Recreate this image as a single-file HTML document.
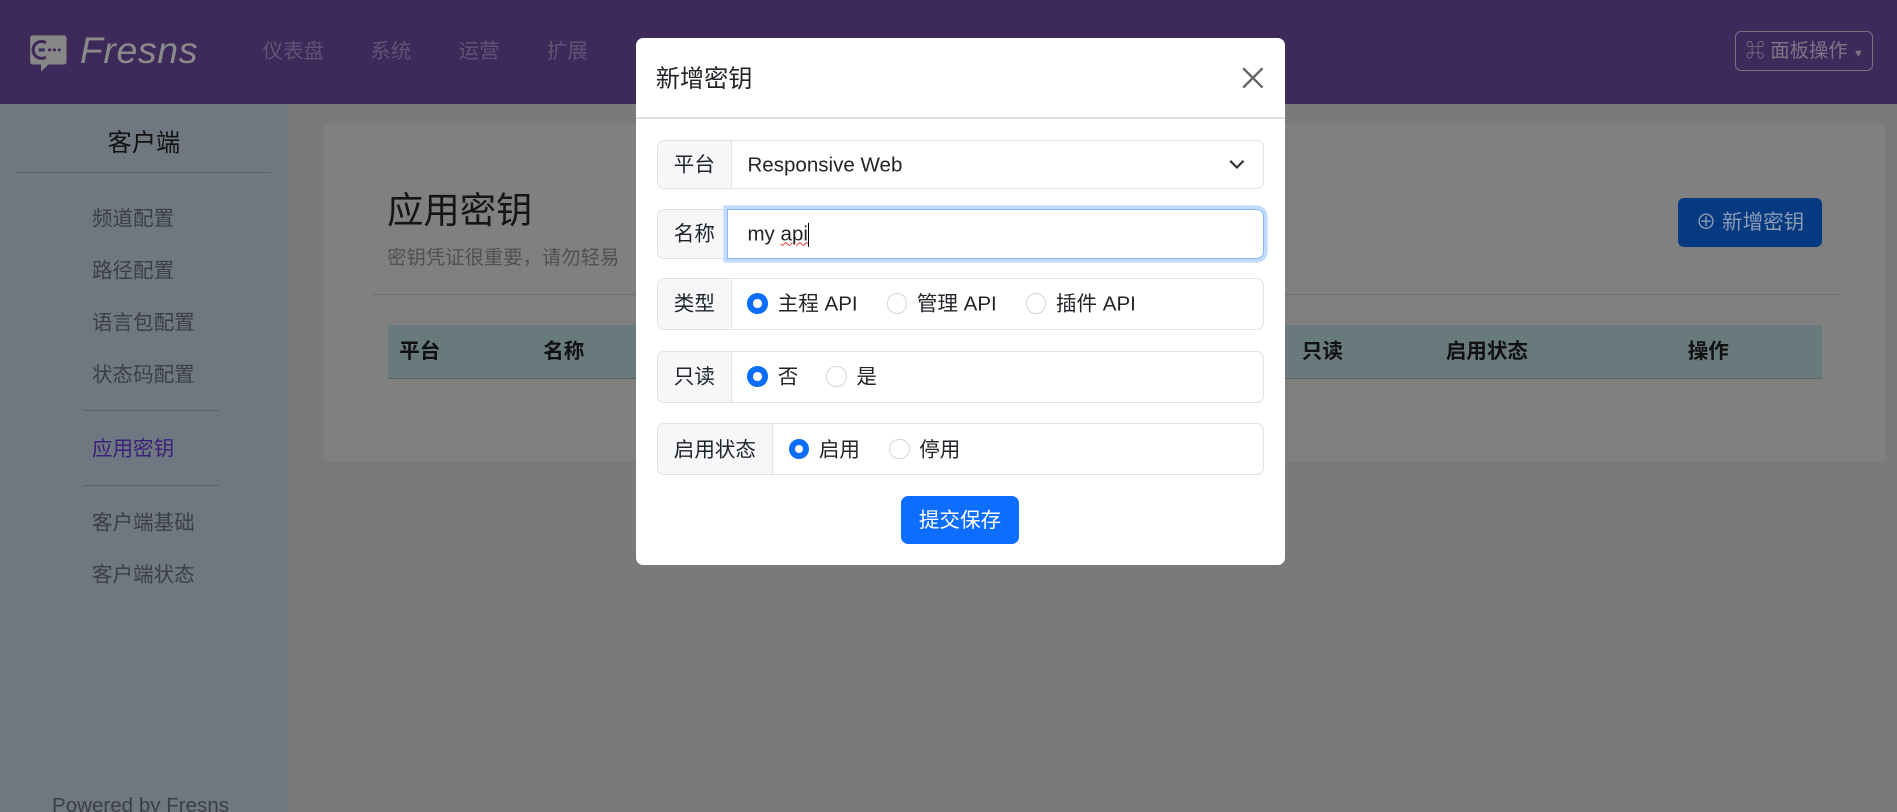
<!DOCTYPE html>
<html><head><meta charset="utf-8"><style>
*{box-sizing:border-box;margin:0;padding:0}
html,body{width:1897px;height:812px;overflow:hidden}
body{font-family:"Liberation Sans","Noto Sans CJK SC",sans-serif;background:#7a7a7a}
#w{zoom:1.20982;width:1568px;height:671px;position:relative;overflow:hidden;background:#7a7a7a}
.a{position:absolute;white-space:nowrap}
.hdr{left:0;top:0;width:1568px;height:86px;background:#3d2a5b}
.nav{top:33px;font-size:17px;color:#5f5475;line-height:1.2}
.side{left:0;top:86px;width:238px;height:585px;background:#6f7780}
.si{left:76px;font-size:17px;color:#3b3f45;transform:translateY(-50%);line-height:1;margin-top:2px}
.ln{height:1px;background:#5c636b}
.card{left:268px;top:102px;width:1290px;height:280px;background:#808080}
.th{top:283px;font-size:17px;font-weight:bold;color:#111;line-height:1}
.modal{left:526px;top:31px;width:536px;height:436px;background:#fff;border-radius:6px}
.grp{left:543px;width:502px;border:1px solid #dee2e6;border-radius:6px;background:#fff;overflow:hidden}
.lbl{position:absolute;left:0;top:0;bottom:0;background:#f6f7f9;border-right:1px solid #dee2e6;font-size:17px;color:#212529;text-align:center}
.lbl span{position:absolute;left:0;right:0;top:50%;transform:translateY(-50%);line-height:1;margin-top:1px}
.r{position:absolute;width:17px;height:17px;border-radius:50%;border:1px solid #d3d6da;top:50%;margin-top:-9px}
.r.on{border:5px solid #0d6efd}
.rt{position:absolute;font-size:17px;color:#212529;top:50%;transform:translateY(-50%);line-height:1;margin-top:1px}
</style></head><body><div id="w">
<div class="a hdr"></div>
<svg class="a" style="left:24px;top:27px" width="32" height="34" viewBox="0 0 32 34"><path d="M3 2h26a2 2 0 0 1 2 2v20a2 2 0 0 1-2 2H16l-6 6v-6H3a2 2 0 0 1-2-2V4a2 2 0 0 1 2-2z" fill="#878787"/><path d="M14 8a7 7 0 1 0 0 12" stroke="#3d2a5b" stroke-width="2.5" fill="none"/><path d="M8 14h5" stroke="#3d2a5b" stroke-width="2.5"/><circle cx="17" cy="14" r="1.3" fill="#3d2a5b"/><circle cx="21" cy="14" r="1.3" fill="#3d2a5b"/><circle cx="25" cy="14" r="1.3" fill="#3d2a5b"/></svg>
<div class="a" style="left:66px;top:24px;font-size:31px;font-style:italic;color:#8a8a8a;letter-spacing:0.5px">Fresns</div>
<div class="a nav" style="left:217px">仪表盘</div>
<div class="a nav" style="left:306px">系统</div>
<div class="a nav" style="left:379px">运营</div>
<div class="a nav" style="left:452px">扩展</div>
<div class="a" style="left:1434px;top:26px;width:114px;height:33px;border:1px solid #7a7080;border-radius:5px;color:#7d7585;font-size:16px;line-height:33px;padding-left:8px">⌘ 面板操作 <span style="font-size:9px">▼</span></div>
<div class="a side"></div>
<div class="a" style="left:0;width:238px;top:108px;text-align:center;font-size:20px;color:#111;line-height:1.1">客户端</div>
<div class="a ln" style="left:12px;top:142px;width:212px"></div>
<div class="a si" style="top:180px">频道配置</div>
<div class="a si" style="top:223px">路径配置</div>
<div class="a si" style="top:266px">语言包配置</div>
<div class="a si" style="top:309px">状态码配置</div>
<div class="a ln" style="left:69px;top:339px;width:112px"></div>
<div class="a si" style="top:370px;color:#3b1f78">应用密钥</div>
<div class="a ln" style="left:69px;top:401px;width:112px"></div>
<div class="a si" style="top:431px">客户端基础</div>
<div class="a si" style="top:474px">客户端状态</div>
<div class="a" style="left:43px;top:656px;font-size:17px;color:#3b3f45">Powered by Fresns</div>
<div class="a card"></div>
<div class="a" style="left:320px;top:158px;font-size:30px;color:#151515;line-height:1.1">应用密钥</div>
<div class="a" style="left:320px;top:205px;font-size:16px;color:#505050;line-height:1.1">密钥凭证很重要，请勿轻易</div>
<div class="a" style="left:1387px;top:164px;width:119px;height:40px;background:#063a80;border-radius:5px;color:#8d9bb5;font-size:17px;line-height:42px;text-align:center">⊕ 新增密钥</div>
<div class="a" style="left:308px;top:243px;width:1212px;height:1px;background:#6e6e6e"></div>
<div class="a" style="left:321px;top:269px;width:1185px;height:44px;background:#687a7c;border-bottom:1px solid #5a6566"></div>
<div class="a th" style="left:330px">平台</div>
<div class="a th" style="left:449px">名称</div>
<div class="a th" style="left:1076px">只读</div>
<div class="a th" style="left:1195px">启用状态</div>
<div class="a th" style="left:1395px">操作</div>

<div class="a modal"></div>
<div class="a" style="left:542px;top:55px;font-size:20px;color:#212529;line-height:1.1">新增密钥</div>
<svg class="a" style="left:1027px;top:55px" width="18" height="18" viewBox="0 0 18 18"><path d="M1 1L17 17M17 1L1 17" stroke="#666" stroke-width="2"/></svg>
<div class="a" style="left:526px;top:97px;width:536px;height:1px;background:#dee2e6"></div>

<div class="a grp" style="top:116px;height:40px"><div class="lbl" style="width:61px"><span>平台</span></div><div class="rt" style="left:74px">Responsive Web</div><svg style="position:absolute;right:15px;top:15px" width="13" height="9" viewBox="0 0 13 9"><path d="M1 1.5l5.5 5.5 5.5-5.5" stroke="#333" stroke-width="1.8" fill="none"/></svg></div>
<div class="a grp" style="top:173px;height:41px"><div class="lbl" style="width:61px"><span>名称</span></div></div>
<div class="a" style="left:601px;top:173px;width:444px;height:41px;border:1px solid #86b7fe;border-radius:0 6px 6px 0;box-shadow:0 0 0 3px #c2dbfe;background:#fff"><div class="rt" style="left:16px">my <span style="text-decoration:underline wavy #d33;text-decoration-thickness:1px">api</span><span style="display:inline-block;width:1px;height:20px;background:#000;vertical-align:middle"></span></div></div>
<div class="a grp" style="top:230px;height:43px"><div class="lbl" style="width:61px"><span>类型</span></div>
<div class="r on" style="left:74px"></div><div class="rt" style="left:99px">主程 API</div>
<div class="r" style="left:189px"></div><div class="rt" style="left:214px">管理 API</div>
<div class="r" style="left:304px"></div><div class="rt" style="left:329px">插件 API</div></div>
<div class="a grp" style="top:290px;height:43px"><div class="lbl" style="width:61px"><span>只读</span></div>
<div class="r on" style="left:74px"></div><div class="rt" style="left:99px">否</div>
<div class="r" style="left:139px"></div><div class="rt" style="left:164px">是</div></div>
<div class="a grp" style="top:350px;height:43px"><div class="lbl" style="width:95px"><span>启用状态</span></div>
<div class="r on" style="left:108px"></div><div class="rt" style="left:133px">启用</div>
<div class="r" style="left:191px"></div><div class="rt" style="left:216px">停用</div></div>
<div class="a" style="left:745px;top:410px;width:97px;height:40px;background:#0d6efd;border-radius:6px;color:#fff;font-size:17px;line-height:42px;text-align:center">提交保存</div>
</div></body></html>
